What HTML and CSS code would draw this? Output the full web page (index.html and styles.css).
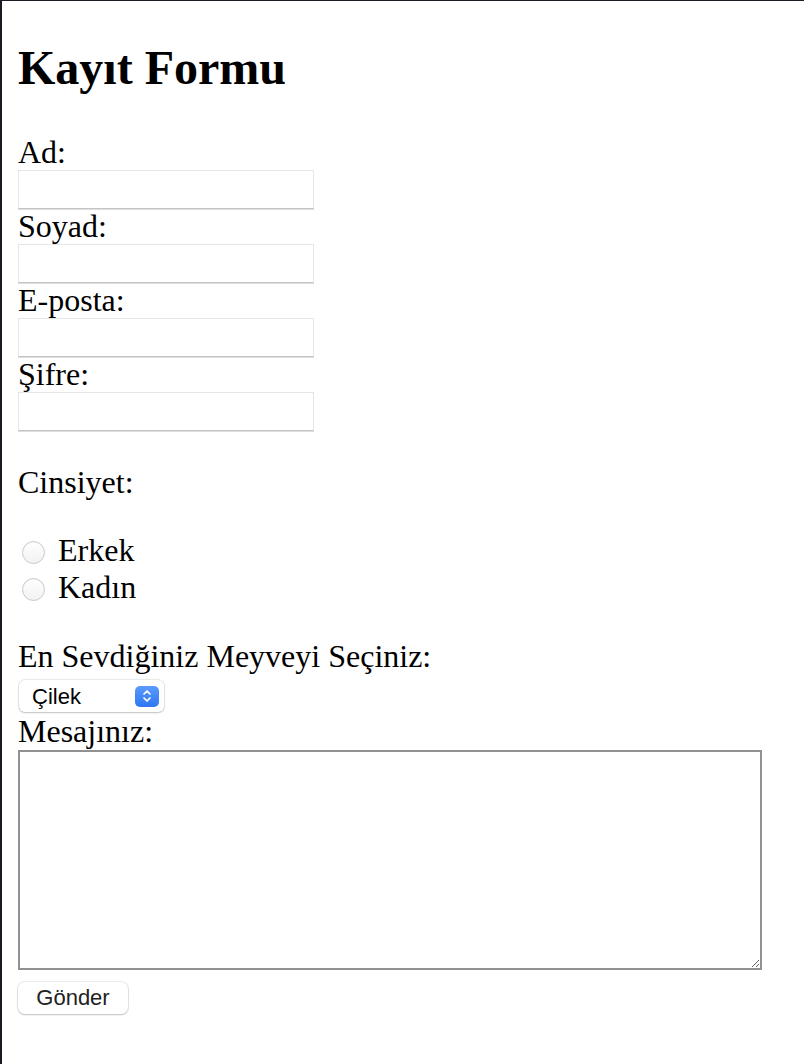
FILE: index.html
```html
<!DOCTYPE html>
<html lang="tr">
<head>
<meta charset="utf-8">
<title>Kayıt Formu</title>
<link rel="stylesheet" href="styles.css">
</head>
<body>
<div class="page">
  <h1 class="title">Kayıt Formu</h1>
  <form class="form">
    <label class="label" for="ad">Ad:</label>
    <input class="field" id="ad" type="text">
    <label class="label" for="soyad">Soyad:</label>
    <input class="field" id="soyad" type="text">
    <label class="label" for="eposta">E-posta:</label>
    <input class="field" id="eposta" type="email">
    <label class="label" for="sifre">Şifre:</label>
    <input class="field" id="sifre" type="password">

    <p class="label group-title">Cinsiyet:</p>
    <div class="radios">
      <label class="radio-row"><input class="radio" type="radio" name="cinsiyet" value="erkek"><span>Erkek</span></label>
      <label class="radio-row"><input class="radio" type="radio" name="cinsiyet" value="kadin"><span>Kadın</span></label>
    </div>

    <label class="label fruit-label" for="meyve">En Sevdiğiniz Meyveyi Seçiniz:</label>
    <div class="select-box">
      <select class="select" id="meyve">
        <option>Çilek</option>
        <option>Elma</option>
        <option>Muz</option>
      </select>
      <span class="select-arrows">
        <svg width="10" height="14" viewBox="0 0 10 14" fill="none" stroke="#fff" stroke-width="1.7" stroke-linecap="round" stroke-linejoin="round">
          <path d="M2 5 L5 2 L8 5"/>
          <path d="M2 9 L5 12 L8 9"/>
        </svg>
      </span>
    </div>

    <label class="label msg-label" for="mesaj">Mesajınız:</label>
    <textarea class="message" id="mesaj"></textarea>

    <button class="submit" type="submit">Gönder</button>
  </form>
</div>
</body>
</html>
```

FILE: styles.css
```css
html, body {
  margin: 0;
  padding: 0;
  background: #ffffff;
  height: 100%;
}

.page {
  box-sizing: border-box;
  min-height: 100vh;
  border-left: 2px solid #1c1a22;
  border-top: 1px solid #1c1a22;
  padding: 0 16px 0 16px;
  font-family: "Liberation Serif", "Times New Roman", serif;
  color: #000;
}

.title {
  margin: 39px 0 0;
  font-size: 48px;
  line-height: 55px;
  font-weight: bold;
}

.form {
  display: flex;
  flex-direction: column;
  align-items: flex-start;
  margin-top: 40px;
}

.label {
  display: block;
  margin: 0;
  font-size: 32px;
  line-height: 35px;
}

.field {
  box-sizing: border-box;
  width: 296px;
  height: 39px;
  margin: 0;
  padding: 2px 6px;
  border: 1px solid #e6e6e6;
  border-bottom-color: #c4c4c4;
  box-shadow: 0 1px 0 #dedede;
  background: #fff;
  font-size: 18px;
  outline: none;
}

.group-title {
  margin-top: 34px;
}

.radios {
  display: flex;
  flex-direction: column;
  margin-top: 32px;
}

.radio-row {
  display: flex;
  align-items: flex-start;
  font-size: 32px;
  line-height: 37px;
}

.radio {
  appearance: none;
  -webkit-appearance: none;
  box-sizing: border-box;
  width: 23px;
  height: 23px;
  margin: 9px 13px 0 4px;
  border: 1px solid #cacaca;
  border-radius: 50%;
  background: linear-gradient(#ffffff, #f2f2f2);
  box-shadow: inset 0 1px 1px rgba(0, 0, 0, 0.04);
  flex: none;
}

.fruit-label {
  margin-top: 33px;
}

.select-box {
  box-sizing: border-box;
  display: flex;
  align-items: center;
  width: 145px;
  height: 32px;
  margin: 6px 0 0 1px;
  padding: 0 5px 0 0;
  border-radius: 6px;
  background: #fff;
  box-shadow: 0 0 0 1px rgba(0, 0, 0, 0.08), 0 1px 2px rgba(0, 0, 0, 0.18);
}

.select {
  appearance: none;
  -webkit-appearance: none;
  flex: 1;
  min-width: 0;
  height: 100%;
  margin: 0;
  padding: 0 0 0 13px;
  border: none;
  background: transparent;
  font-family: "Liberation Sans", Arial, sans-serif;
  font-size: 22px;
  color: #000;
  outline: none;
}

.select-arrows {
  display: flex;
  align-items: center;
  justify-content: center;
  width: 24px;
  height: 21px;
  border-radius: 5px;
  background: linear-gradient(#5a9bfb, #2f76f2);
  flex: none;
}

.msg-label {
  margin-top: 2px;
}

.message {
  box-sizing: border-box;
  width: 744px;
  height: 220px;
  margin: 1px 0 0;
  border: 2px solid #919191;
  background: #fff;
  font-family: "Liberation Mono", monospace;
  font-size: 16px;
  resize: both;
  outline: none;
}

.submit {
  box-sizing: border-box;
  width: 110px;
  height: 32px;
  margin: 12px 0 0;
  padding: 0;
  border: none;
  border-radius: 7px;
  background: #fff;
  box-shadow: 0 0 0 1px rgba(0, 0, 0, 0.07), 0 1px 2px rgba(0, 0, 0, 0.2);
  font-family: "Liberation Sans", Arial, sans-serif;
  font-size: 22px;
  color: #222;
}
```
